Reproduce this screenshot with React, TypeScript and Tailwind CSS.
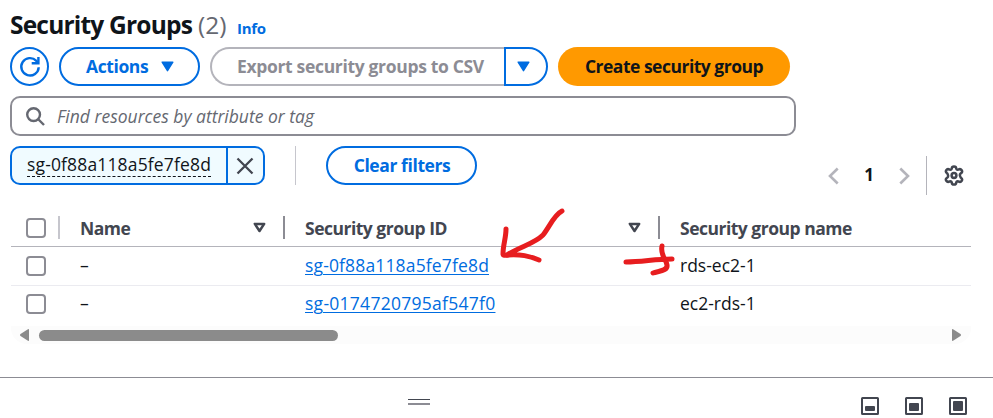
import type { ReactNode } from "react";

const columns = "grid grid-cols-[47px_225px_375px_1fr] items-center";

function Checkbox() {
  return <span className="ml-[15px] block h-5 w-5 rounded-[4px] border-2 border-[#8c8c94] bg-white" />;
}

function Caret() {
  return (
    <svg className="mb-px" width="13" height="11" viewBox="0 0 13 11" fill="#006ce0" stroke="#006ce0" strokeWidth="1.5" strokeLinejoin="round">
      <path d="M1.2 1.2h10.6L6.5 9.6z" />
    </svg>
  );
}

function SortIcon() {
  return (
    <svg width="13" height="11" viewBox="0 0 13 11" fill="none" stroke="#424650" strokeWidth="2.5" strokeLinejoin="round">
      <path d="M1.8 1.9h9.4L6.5 9z" />
    </svg>
  );
}

function HeaderCell({ label, sortable, light }: { label: string; sortable?: boolean; light?: boolean }) {
  return (
    <div className={`flex h-[23px] items-center border-l-2 pl-5 ${light ? "border-[#c6c6cd]" : "border-[#8c8c94]"}`}>
      <span className="font-bold tracking-[-0.5px] text-[#424650]">{label}</span>
      {sortable && <span className="mr-[17px] ml-auto"><SortIcon /></span>}
    </div>
  );
}

function Row({ id, name, last }: { id: string; name: string; last?: boolean }) {
  return (
    <div className={`${columns} ${last ? "h-[40px] pb-[4px]" : "h-[39px] border-b border-[#ebebf0]"}`}>
      <Checkbox />
      <span className="pb-[2px] pl-[22px]">–</span>
      <span className="pb-[2px] pl-[22px]">
        <a className={`text-[#006ce0] underline decoration-1 underline-offset-2 ${last ? "tracking-[0.27px]" : "tracking-[0.15px]"}`}>{id}</a>
      </span>
      <span className="pb-[2px] pl-[22px]">{name}</span>
    </div>
  );
}

function PanelIcon({ children }: { children: ReactNode }) {
  return (
    <svg width="18" height="18" viewBox="0 0 18 18" fill="#424650">
      <rect x="1" y="1" width="16" height="16" rx="0.5" fill="none" stroke="#424650" strokeWidth="2" />
      {children}
    </svg>
  );
}

export default function App() {
  return (
    <div className="relative h-[418px] w-[993px] overflow-hidden bg-white font-['Open_Sans','Noto_Sans',sans-serif] text-[17.5px] leading-6 whitespace-nowrap text-[#0f141a]">
      <header className="flex h-[47px] items-baseline pt-[9px] pl-[10px] leading-8">
        <h1 className="w-[188px] text-[24.5px] font-bold tracking-[-0.8px]">Security Groups</h1>
        <span className="w-[39px] text-[24.5px] text-[#656871]">(2)</span>
        <a className="text-[15px] font-bold tracking-[-0.3px] text-[#006ce0]">Info</a>
      </header>

      <div className="flex h-[39px] pl-[10px] font-bold">
        <button className="flex w-[39px] items-center justify-center rounded-full border-2 border-[#006ce0]">
          <svg width="22" height="22" viewBox="0 0 22 22" fill="none" stroke="#006ce0" strokeWidth="2.4">
            <path d="M19.7 11.2A8.7 8.7 0 1 1 17.3 4.8L19 6.5" />
            <path d="M19.4 1v6.2h-6.7" />
          </svg>
        </button>
        <button className="ml-[10px] flex w-[141px] items-center gap-[13px] rounded-full border-2 border-[#006ce0] pl-[25px] tracking-[-0.4px] text-[#006ce0]">
          <span className="pb-[2px]">Actions</span> <Caret />
        </button>
        <button className="ml-[10px] flex w-[294px] items-center rounded-l-full border-2 border-r-0 border-[#b4b4bb] pb-[2px] pl-[25px] tracking-[-0.33px] text-[#8c8c94]">
          Export security groups to CSV
        </button>
        <button className="flex w-[44px] items-center rounded-r-full border-2 border-[#006ce0] pl-[10.5px]">
          <Caret />
        </button>
        <button className="ml-[10px] w-[232px] rounded-full bg-[#ff9900] pb-[2px] tracking-[-0.5px]">Create security group</button>
      </div>

      <div className="mt-[10px] ml-[10px] flex h-10 w-[786px] items-center rounded-[10px] border-2 border-[#8c8c94] pl-[14px]">
        <svg width="19" height="19" viewBox="0 0 19 19" fill="none" stroke="#656871" strokeWidth="2.4">
          <circle cx="7.6" cy="7.6" r="6.4" />
          <path d="M12 12l6 6" />
        </svg>
        <span className="ml-[12px] pb-px text-[#656871] italic">Find resources by attribute or tag</span>
      </div>

      <div className="mt-[10px] flex h-[63px] pl-[10px]">
        <div className="flex h-[39px] w-[255px] rounded-[10px] border-2 border-[#006ce0] bg-[#f0fbff]">
          <div className="flex flex-1 items-start pt-[4px] pl-[15px]">
            <span className="border-b border-dashed border-[#0f141a] leading-6 tracking-[0.15px]">sg-0f88a118a5fe7fe8d</span>
          </div>
          <button className="flex w-[37px] items-center justify-center border-l-2 border-[#006ce0] pr-[2px]">
            <svg width="18" height="18" viewBox="0 0 18 18" stroke="#424650" strokeWidth="2.3">
              <path d="M1.5 1.5l15 15M16.5 1.5l-15 15" />
            </svg>
          </button>
        </div>
        <div className="ml-[30px] h-[39px] w-px bg-[#c6c6cd]" />
        <button className="ml-[30px] h-[39px] w-[151px] rounded-full border-2 border-[#006ce0] pb-[2px] pl-px font-bold tracking-[-0.4px] text-[#006ce0]">
          Clear filters
        </button>
        <div className="mt-[10px] ml-auto flex h-[39px] items-center pr-[29px]">
          <svg width="11" height="18" viewBox="0 0 11 18" fill="none" stroke="#b4b4bb" strokeWidth="2.6"><path d="M9.7 1.5L2 9l7.7 7.5" /></svg>
          <span className="w-[60px] pb-px text-center text-[17px] font-bold">1</span>
          <svg width="11" height="18" viewBox="0 0 11 18" fill="none" stroke="#b4b4bb" strokeWidth="2.6"><path d="M1.3 1.5L9 9l-7.7 7.5" /></svg>
          <span className="mr-[17px] ml-[16px] h-full w-px bg-[#b4b4bb]" />
          <svg width="20" height="21" viewBox="0 0 20 21" fill="none" stroke="#424650" strokeWidth="2.5" strokeLinejoin="round">
            <path d="M7.8 3.6Q7.8 1.5 10 1.5T12.2 3.6Q12.7 5 14.3 4.6Q16.5 3.4 17.7 5.2T16.9 8.2Q15.600 9.3 15.9 10.500T16.900 12.800Q18.800 14 17.700 15.800T14.300 16.400Q12.700 16 12.200 17.400Q12.200 19.500 10 19.500T7.800 17.400Q7.300 16 5.700 16.400Q3.500 17.600 2.300 15.800T3.100 12.800Q4.400 11.700 4.100 10.500T3.100 8.200Q1.200 7 2.300 5.200T5.700 4.600Q7.300 5 7.800 3.600z" />
            <circle cx="10" cy="10.5" r="2.4" />
          </svg>
        </div>
      </div>

      <div className="mr-[22px] ml-[11px]">
        <div className={`${columns} h-[38px] border-b border-[#b4b4bb]`}>
          <Checkbox />
          <HeaderCell label="Name" sortable light />
          <HeaderCell label="Security group ID" sortable />
          <HeaderCell label="Security group name" />
        </div>
        <Row id="sg-0f88a118a5fe7fe8d" name="rds-ec2-1" />
        <Row id="sg-0174720795af547f0" name="ec2-rds-1" last />
        <div className="flex h-[18px] items-center rounded-b-[16px] bg-[#fcfcfc] pr-[10px] pl-[9px]">
          <svg width="9" height="12" viewBox="0 0 9 12" fill="#8b8b8b"><path d="M9 0v12L7.5 11.5.5 7Q-.5 6 .5 5L7.5.5z" /></svg>
          <div className="ml-[10px] h-[11px] w-[299px] rounded-full bg-[#8b8b8b]" />
          <svg className="ml-auto" width="9" height="12" viewBox="0 0 9 12" fill="#8b8b8b"><path d="M0 0v12l1.5-.5L8.5 7q1-1 0-2L1.5.5z" /></svg>
        </div>
      </div>

      <footer className="mt-[33px] flex h-[41px] border-t border-[#8c8c94] pl-[408px]">
        <div className="mt-[21px] h-[6px] w-[22px] border-t border-b-2 border-t-[#424650] border-b-[#8c8c94]" />
        <div className="mt-[19px] mr-[26px] ml-auto flex gap-[26px]">
          <PanelIcon><rect x="4" y="9" width="10" height="5" rx="1" /></PanelIcon>
          <PanelIcon><rect x="4" y="6" width="10" height="8" rx="1" /></PanelIcon>
          <PanelIcon><rect x="4" y="4" width="10" height="10" rx="1" /></PanelIcon>
        </div>
      </footer>

      <svg className="pointer-events-none absolute inset-0" width="993" height="418" viewBox="0 0 993 418" fill="none" stroke="#e71d1f" strokeWidth="5" strokeLinecap="round" strokeLinejoin="round">
        <path d="M562 211C554 215 550 226 543 235C534 244 521 246 507 255C521 254 529 256 539 260" />
        <path d="M506 229C506 238 503 245 503 254Q503 256 508 255" />
        <path d="M626 262C642 262 655 259 672 259" />
        <path d="M662 246C660 255 666 259 667 265C668 271 659 271 653 273" />
      </svg>
    </div>
  );
}
